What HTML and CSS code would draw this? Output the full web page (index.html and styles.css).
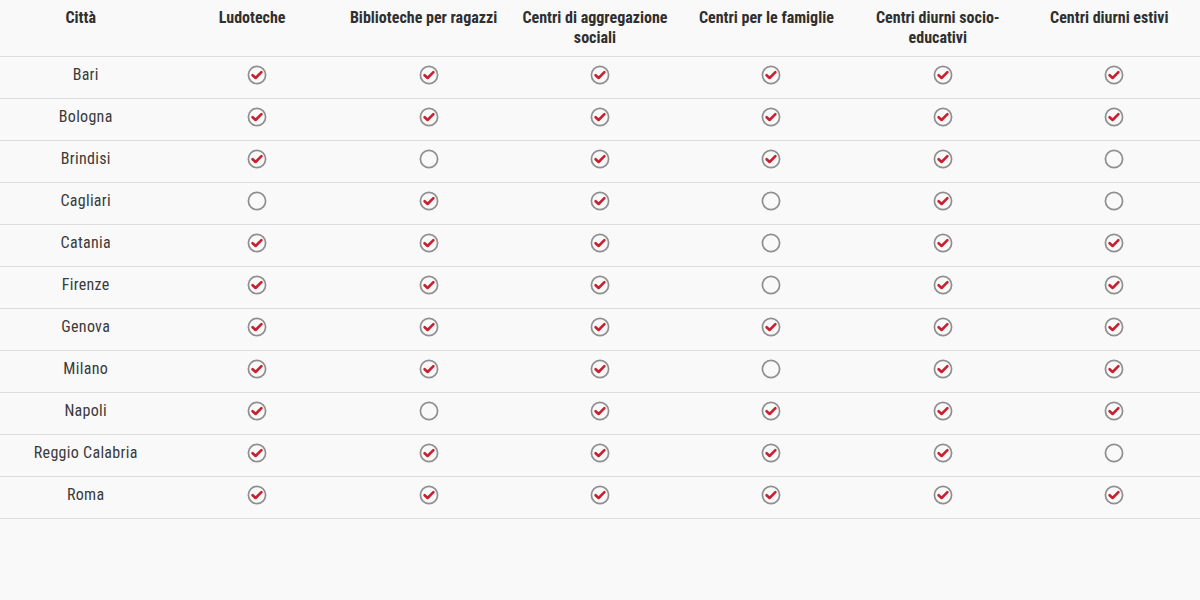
FILE: index.html
```html
<!DOCTYPE html>
<html lang="it">
<head>
<meta charset="utf-8">
<title>Servizi per città</title>
<link rel="stylesheet" href="styles.css">
</head>
<body>
<svg width="0" height="0" class="defs">
  <defs>
    <symbol id="yes" viewBox="0 0 20 20">
      <circle cx="10" cy="10" r="8.6" fill="none" stroke="#8f8f8f" stroke-width="1.7"/>
      <path d="M5.6 10.2 L8.6 13 L14.4 7.2" fill="none" stroke="#c9202f" stroke-width="2.6" stroke-linecap="round" stroke-linejoin="round"/>
    </symbol>
    <symbol id="no" viewBox="0 0 20 20">
      <circle cx="10" cy="10" r="8.6" fill="none" stroke="#8f8f8f" stroke-width="1.7"/>
    </symbol>
  </defs>
</svg>
<table class="grid">
  <thead>
    <tr>
      <th>Città</th>
      <th>Ludoteche</th>
      <th>Biblioteche per ragazzi</th>
      <th>Centri di aggregazione sociali</th>
      <th>Centri per le famiglie</th>
      <th>Centri diurni socio-educativi</th>
      <th>Centri diurni estivi</th>
    </tr>
  </thead>
  <tbody id="rows"></tbody>
</table>
<script src="app.js"></script>
</body>
</html>
```
FILE: styles.css
```css
html, body {
  margin: 0;
  padding: 0;
  background: #f9f9f9;
}
body {
  font-family: "Roboto Condensed", "Liberation Sans Narrow", "DejaVu Sans Condensed", Roboto, sans-serif;
  color: #3a3a3a;
}
.defs {
  position: absolute;
  width: 0;
  height: 0;
}
.grid {
  width: 100%;
  table-layout: fixed;
  border-collapse: collapse;
}
.grid th {
  font-weight: bold;
  font-size: 16px;
  line-height: 20px;
  color: #2f2f2f;
  padding: 8px 15px 8px 5px;
  vertical-align: top;
  text-align: center;
  border-bottom: 1px solid #dcdcdc;
}
.grid td {
  height: 42px;
  box-sizing: border-box;
  text-align: center;
  vertical-align: middle;
  font-size: 16px;
  letter-spacing: 0.3px;
  border-bottom: 1px solid #dcdcdc;
}
.grid td.city {
  padding: 0 6px 7px;
}
.grid td.mark {
  padding: 0 6px 5px;
}
.icon {
  display: block;
  margin: 0 auto;
  width: 20px;
  height: 20px;
}
```
FILE: app.js
```js
var data = [
  ["Bari", 1,1,1,1,1,1],
  ["Bologna", 1,1,1,1,1,1],
  ["Brindisi", 1,0,1,1,1,0],
  ["Cagliari", 0,1,1,0,1,0],
  ["Catania", 1,1,1,0,1,1],
  ["Firenze", 1,1,1,0,1,1],
  ["Genova", 1,1,1,1,1,1],
  ["Milano", 1,1,1,0,1,1],
  ["Napoli", 1,0,1,1,1,1],
  ["Reggio Calabria", 1,1,1,1,1,0],
  ["Roma", 1,1,1,1,1,1]
];
var tb = document.getElementById("rows");
var html = "";
data.forEach(function (r) {
  html += '<tr><td class="city">' + r[0] + "</td>";
  for (var i = 1; i < r.length; i++) {
    html += '<td class="mark"><svg class="icon"><use href="#' + (r[i] ? "yes" : "no") + '"/></svg></td>';
  }
  html += "</tr>";
});
tb.innerHTML = html;
```
